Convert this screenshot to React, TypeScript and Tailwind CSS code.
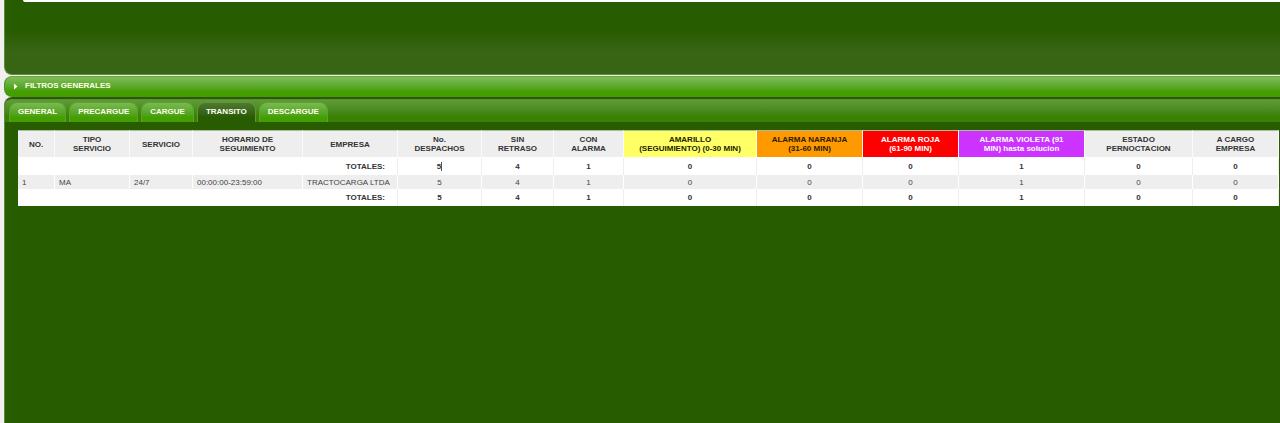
import React from "react";

type Column = { label: string[]; width: string; tone?: string };

const columns: Column[] = [
  { label: ["NO."], width: "w-[37px]" },
  { label: ["TIPO", "SERVICIO"], width: "w-[75px]" },
  { label: ["SERVICIO"], width: "w-[63px]" },
  { label: ["HORARIO DE", "SEGUIMIENTO"], width: "w-[110px]" },
  { label: ["EMPRESA"], width: "w-[95px]" },
  { label: ["No.", "DESPACHOS"], width: "w-[84px]" },
  { label: ["SIN", "RETRASO"], width: "w-[72px]" },
  { label: ["CON", "ALARMA"], width: "w-[70px]" },
  { label: ["AMARILLO", "(SEGUIMIENTO) (0-30 MIN)"], width: "w-[133px]", tone: "bg-[#ffff66] text-[#222200]" },
  { label: ["ALARMA NARANJA", "(31-60 MIN)"], width: "w-[106px]", tone: "bg-[#ff9900] text-[#2b1a00]" },
  { label: ["ALARMA ROJA", "(61-90 MIN)"], width: "w-[96px]", tone: "bg-[#ff0000] text-white" },
  { label: ["ALARMA VIOLETA (91", "MIN) hasta solucion"], width: "w-[126px]", tone: "bg-[#cc33ff] text-white" },
  { label: ["ESTADO", "PERNOCTACION"], width: "w-[108px]" },
  { label: ["A CARGO", "EMPRESA"], width: "w-[86px]" },
];

const counts = ["5", "4", "1", "0", "0", "0", "1", "0", "0"];
const details = ["1", "MA", "24/7", "00:00:00-23:59:00", "TRACTOCARGA LTDA"];
const tabs = ["GENERAL", "PRECARGUE", "CARGUE", "TRANSITO", "DESCARGUE"];

function TotalsRow({ caret = false }: { caret?: boolean }) {
  return (
    <tr className="h-[17px] bg-white font-bold">
      <th colSpan={5} scope="row" className="border-r border-[#eeeeee] py-0 pr-3 pl-0 text-right">
        TOTALES:
      </th>
      {counts.map((count, i) => (
        <td key={i} className="border-r border-[#eeeeee] p-0 text-center">
          <span className={caret && i === 0 ? "border-r border-[#555555]" : ""}>{count}</span>
        </td>
      ))}
    </tr>
  );
}

function DispatchTable() {
  return (
    <table className="w-full table-fixed border-separate border-spacing-0 text-[8px] leading-[9px] text-[#333333]">
      <colgroup>
        {columns.map((c, i) => (
          <col key={i} className={c.width} />
        ))}
      </colgroup>
      <thead>
        <tr className="h-[28px]">
          {columns.map((c, i) => (
            <th
              key={i}
              scope="col"
              className={`border-t border-r border-b border-t-[#a9bd9a] border-r-[#fafafa] border-b-white p-0 text-center font-bold whitespace-nowrap ${c.tone ?? "bg-[#eeeeee]"}`}
            >
              {c.label.map((line) => (
                <span key={line} className="block">
                  {line}
                </span>
              ))}
            </th>
          ))}
        </tr>
      </thead>
      <tbody>
        <TotalsRow caret />
        <tr className="h-[14px] bg-[#eeeeee] text-[#444444]">
          {details.map((value, i) => (
            <td key={i} className="border-r border-white px-1 py-0 whitespace-nowrap">
              {value}
            </td>
          ))}
          {counts.map((count, i) => (
            <td key={i} className="border-r border-white p-0 text-center">
              {count}
            </td>
          ))}
        </tr>
        <TotalsRow />
      </tbody>
    </table>
  );
}

export default function App() {
  return (
    <div className="flex min-h-screen flex-col bg-[#f0f0f0] pl-1 font-['Liberation_Sans',Arial,sans-serif]">
      <section className="h-[75px] rounded-bl-lg border-b border-l border-[#5f8c3c] bg-linear-to-b from-[#285c00] from-40% to-[#386513] to-70% pl-[18px]">
        <div className="h-[2px] rounded-bl-sm bg-white" />
      </section>

      <button
        type="button"
        className="mt-px flex h-[21px] items-center rounded-l-lg border-y border-l border-[#4a941c] border-t-[#6da049] bg-linear-to-b from-[#7fbd55] to-[#459e00] to-75% pb-px pl-2 text-left text-[8px] font-bold text-[#ffffe6]"
      >
        <svg viewBox="0 0 5 7" className="mr-[7px] h-[7px] w-[5px]" aria-hidden="true">
          <path d="M1 0.5 4.5 3.5 1 6.5Z" fill="currentColor" />
        </svg>
        FILTROS GENERALES
      </button>

      <main className="flex-1 rounded-tl-lg border-l border-[#5f8c3c] bg-[#285c00] pt-[2px]">
        <nav role="tablist" className="flex h-[23px] items-end gap-[3px] rounded-tl-md border-t border-[#5f8c3c] bg-linear-to-b from-[#609a38] to-[#3a8104] to-75% pl-1">
          {tabs.map((tab) => {
            const active = tab === "TRANSITO";
            return (
              <button
                key={tab}
                type="button"
                role="tab"
                aria-selected={active}
                className={`h-5 rounded-t-lg px-2 pb-[2px] text-[8px] font-bold ${
                  active
                    ? "border-x border-t border-[#5f9438] bg-linear-to-b from-[#50792f] to-[#285c00] to-75% text-white"
                    : "border-x border-t border-[#5aa42a] bg-linear-to-b from-[#7ab951] to-[#459e00] to-75% text-[#ffffe6]"
                }`}
              >
                {tab}
              </button>
            );
          })}
        </nav>
        <div className="pt-2 pr-px pl-[13px]">
          <DispatchTable />
        </div>
      </main>
    </div>
  );
}
